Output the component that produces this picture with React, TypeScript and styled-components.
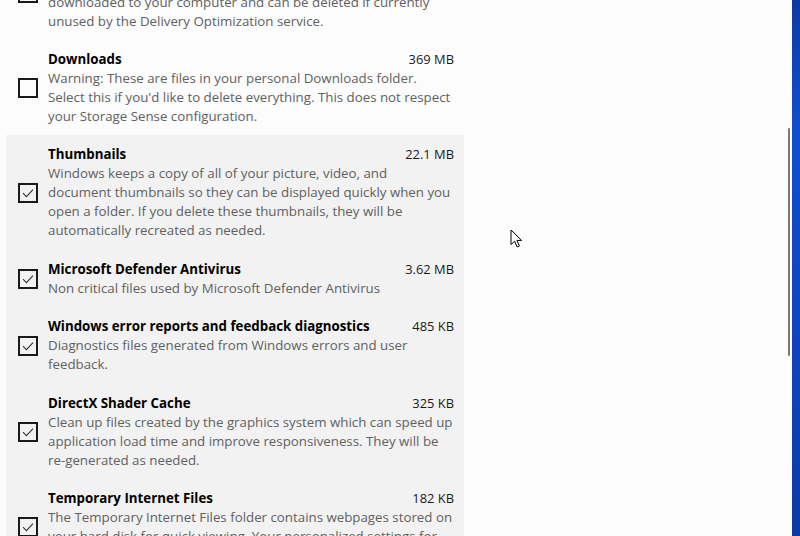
import React, { useLayoutEffect, useRef } from 'react';
import styled, { createGlobalStyle } from 'styled-components';

const GlobalStyle = createGlobalStyle`
  html, body {
    margin: 0;
    padding: 0;
    height: 100%;
    overflow: hidden;
  }
  body {
    font-family: 'Segoe UI', 'Open Sans', 'Noto Sans', sans-serif;
    background: #fcfcfc;
  }
`;

const Screen = styled.div`
  position: relative;
  display: flex;
  width: 800px;
  height: 536px;
`;

const Window = styled.div`
  flex: 1;
  display: flex;
  background: #fcfcfc;
`;

const ScrollArea = styled.div`
  flex: 1;
  height: 536px;
  overflow: hidden;
`;

const List = styled.div`
  width: 458px;
  margin-left: 6px;
`;

const Item = styled.div<{ $shaded?: boolean }>`
  display: flex;
  align-items: center;
  gap: 10px;
  padding: 10.6px 10px 8.8px 12px;
  background: ${({ $shaded }) => ($shaded ? '#f2f2f2' : 'transparent')};
`;

const Box = styled.div`
  flex: none;
  width: 20px;
  height: 20px;
  box-sizing: border-box;
  border: 2px solid #1a1a1a;
  display: flex;
  align-items: center;
  justify-content: center;
  background: transparent;
`;

const Body = styled.div`
  flex: 1;
  min-width: 0;
`;

const Head = styled.div`
  display: flex;
  justify-content: space-between;
  align-items: baseline;
  height: 19px;
  line-height: 19px;
`;

const Title = styled.div`
  font-size: 13.3px;
  font-weight: 700;
  color: #000;
  white-space: nowrap;
`;

const Size = styled.div`
  font-size: 12.9px;
  color: #1b1b1b;
  white-space: nowrap;
`;

const Description = styled.div`
  font-size: 13.3px;
  line-height: 19px;
  color: #616161;
  white-space: pre;
`;

const ScrollTrack = styled.div`
  flex: none;
  width: 4px;
  display: flex;
  flex-direction: column;
  align-items: flex-start;
`;

const ScrollThumb = styled.div`
  width: 2px;
  height: 228px;
  margin-top: 128px;
  background: #7a7a7a;
  border-radius: 1px;
`;

const Desktop = styled.div`
  flex: none;
  width: 8px;
  height: 536px;
  background: linear-gradient(180deg, #0b3aa6 0%, #0f4fd0 25%, #0d45c0 60%, #0a3aa8 100%);
`;

const Pointer = styled.svg`
  position: absolute;
  left: 510px;
  top: 229px;
  width: 13px;
  height: 20px;
`;

type Entry = {
  title: string;
  size: string;
  text: string;
  checked: boolean;
  shaded?: boolean;
};

const entries: Entry[] = [
  {
    title: 'Delivery Optimization Files',
    size: '16.4 MB',
    text:
      'Delivery Optimization files are files that were previously\ndownloaded to your computer and can be deleted if currently\nunused by the Delivery Optimization service.',
    checked: false,
  },
  {
    title: 'Downloads',
    size: '369 MB',
    text:
      "Warning: These are files in your personal Downloads folder.\nSelect this if you'd like to delete everything. This does not respect\nyour Storage Sense configuration.",
    checked: false,
  },
  {
    title: 'Thumbnails',
    size: '22.1 MB',
    text:
      'Windows keeps a copy of all of your picture, video, and\ndocument thumbnails so they can be displayed quickly when you\nopen a folder. If you delete these thumbnails, they will be\nautomatically recreated as needed.',
    checked: true,
    shaded: true,
  },
  {
    title: 'Microsoft Defender Antivirus',
    size: '3.62 MB',
    text: 'Non critical files used by Microsoft Defender Antivirus',
    checked: true,
    shaded: true,
  },
  {
    title: 'Windows error reports and feedback diagnostics',
    size: '485 KB',
    text: 'Diagnostics files generated from Windows errors and user\nfeedback.',
    checked: true,
    shaded: true,
  },
  {
    title: 'DirectX Shader Cache',
    size: '325 KB',
    text:
      'Clean up files created by the graphics system which can speed up\napplication load time and improve responsiveness. They will be\nre-generated as needed.',
    checked: true,
    shaded: true,
  },
  {
    title: 'Temporary Internet Files',
    size: '182 KB',
    text:
      'The Temporary Internet Files folder contains webpages stored on\nyour hard disk for quick viewing. Your personalized settings for\nwebpages will be left intact.',
    checked: true,
    shaded: true,
  },
];

const Check = () => (
  <svg width="14" height="14" viewBox="0 0 14 14">
    <path d="M2 7.2 L5.4 10.6 L12 3.6" fill="none" stroke="#333" strokeWidth="1.1" />
  </svg>
);

const App = () => {
  const scrollRef = useRef<HTMLDivElement>(null);

  useLayoutEffect(() => {
    if (scrollRef.current) scrollRef.current.scrollTop = 56;
  }, []);

  return (
    <>
      <GlobalStyle />
      <Screen>
        <Window>
          <ScrollArea ref={scrollRef}>
            <List>
              {entries.map(({ title, size, text, checked, shaded }) => (
                <Item key={title} $shaded={shaded}>
                  <Box>{checked && <Check />}</Box>
                  <Body>
                    <Head>
                      <Title>{title}</Title>
                      <Size>{size}</Size>
                    </Head>
                    <Description>{text}</Description>
                  </Body>
                </Item>
              ))}
            </List>
          </ScrollArea>
          <ScrollTrack>
            <ScrollThumb />
          </ScrollTrack>
        </Window>
        <Desktop />
        <Pointer viewBox="0 0 13 20">
          <path
            d="M1 1 L1 15.5 L4.6 12.2 L7.2 18 L9.4 17 L6.9 11.4 L11.6 11.4 Z"
            fill="#fff"
            stroke="#000"
            strokeWidth="1"
            strokeLinejoin="round"
          />
        </Pointer>
      </Screen>
    </>
  );
};

export default App;
